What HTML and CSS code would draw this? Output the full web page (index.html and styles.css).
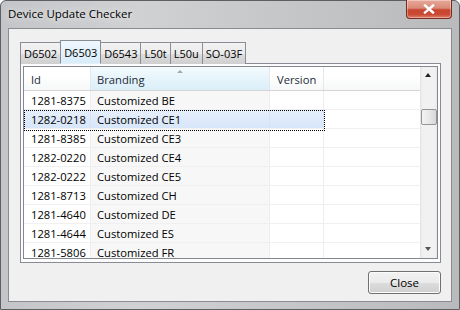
FILE: index.html
```html
<!DOCTYPE html>
<html lang="en">
<head>
<meta charset="utf-8">
<link rel="stylesheet" href="styles.css">
</head>
<body>
<div class="window">
  <div class="titlebar">
    <span class="title">Device Update Checker</span>
    <span class="close-x">
      <svg width="14" height="10" viewBox="0 0 14 10"><path d="M3 1.5 L11 8.5 M11 1.5 L3 8.5" stroke="#fff" stroke-width="2.4" stroke-linecap="square"/></svg>
    </span>
  </div>
  <div class="client">
    <div class="tabs">
      <span class="tab">D6502</span>
      <span class="tab sel">D6503</span>
      <span class="tab">D6543</span>
      <span class="tab">L50t</span>
      <span class="tab">L50u</span>
      <span class="tab">SO-03F</span>
    </div>
    <div class="panel">
      <div class="list">
        <div class="grid">
          <div class="row head">
            <span class="c id">Id</span>
            <span class="c br sorted">Branding<i class="arrow"></i></span>
            <span class="c ver">Version</span>
            <span class="c rest"></span>
          </div>
          <div class="row"><span class="c id">1281-8375</span><span class="c br">Customized BE</span><span class="c ver"></span><span class="c rest"></span></div>
          <div class="row selected"><span class="c id">1282-0218</span><span class="c br">Customized CE1</span><span class="c ver"></span><span class="c rest"></span></div>
          <div class="row"><span class="c id">1281-8385</span><span class="c br">Customized CE3</span><span class="c ver"></span><span class="c rest"></span></div>
          <div class="row"><span class="c id">1282-0220</span><span class="c br">Customized CE4</span><span class="c ver"></span><span class="c rest"></span></div>
          <div class="row"><span class="c id">1282-0222</span><span class="c br">Customized CE5</span><span class="c ver"></span><span class="c rest"></span></div>
          <div class="row"><span class="c id">1281-8713</span><span class="c br">Customized CH</span><span class="c ver"></span><span class="c rest"></span></div>
          <div class="row"><span class="c id">1281-4640</span><span class="c br">Customized DE</span><span class="c ver"></span><span class="c rest"></span></div>
          <div class="row"><span class="c id">1281-4644</span><span class="c br">Customized ES</span><span class="c ver"></span><span class="c rest"></span></div>
          <div class="row"><span class="c id">1281-5806</span><span class="c br">Customized FR</span><span class="c ver"></span><span class="c rest"></span></div>
        </div>
        <div class="scroll">
          <span class="up"></span>
          <span class="thumb"></span>
          <span class="track"></span>
          <span class="down"></span>
        </div>
      </div>
    </div>
    <div class="buttons">
      <span class="btn">Close</span>
    </div>
  </div>
</div>
</body>
</html>
```

FILE: styles.css
```css
*{margin:0;padding:0;box-sizing:border-box;}
body{width:460px;height:310px;overflow:hidden;background:#fff;
  font-family:"Open Sans","Noto Sans",sans-serif;font-size:11px;color:#000;}

.window{width:460px;height:310px;display:flex;flex-direction:column;
  border:1px solid #5d5f62;border-radius:6px 6px 0 0;
  background:linear-gradient(90deg,#c3c5c8 0%,#d0d1d3 30%,#c6c7c9 60%,#b9babc 100%);
}
.titlebar{height:27px;display:flex;align-items:flex-start;justify-content:space-between;padding-left:7px;}
.title{font-size:11.5px;line-height:26px;color:#000;text-shadow:0 0 8px #e9e9e9,0 0 4px #ececec;}
.close-x{width:46px;height:19px;margin-right:7px;margin-top:-1px;display:flex;align-items:center;justify-content:center;
  border:1px solid #7b2a1f;border-top:none;border-radius:0 0 4px 4px;
  background:linear-gradient(#e8a89a 0%,#d98a78 45%,#c8452f 55%,#c94a34 80%,#e0806a 100%);
  box-shadow:inset 0 0 0 1px rgba(255,255,255,.35);}

.client{flex:1;margin:0 7px 7px 7px;border:1px solid #8a8c8f;background:#f0f0f0;
  display:flex;flex-direction:column;padding:11px 10px 0 11px;}

.tabs{display:flex;align-items:flex-end;height:24px;margin-bottom:-1px;position:relative;z-index:1;}
.tab{height:22px;line-height:22px;padding:0 3px;border:1px solid #898c95;border-bottom:none;margin-right:-1px;
  background:linear-gradient(#f2f2f2 0%,#ebebeb 50%,#dddddd 51%,#cfcfcf 100%);font-size:11px;}
.tab.sel{height:24px;line-height:23px;background:linear-gradient(#eef7fd 0%,#e3f2fc 50%,#d8ecfa 100%);
  border-bottom:1px solid #e4f0f9;position:relative;z-index:2;}

.panel{height:200px;border:1px solid #898c95;background:#fcfcfc;padding:2px;}
.list{height:193px;border:1px solid #828790;background:#fff;display:flex;overflow:hidden;}
.grid{flex:1;overflow:hidden;}
.row{display:flex;height:19px;border-bottom:1px solid #f0f0f0;}
.c{display:block;padding-left:7px;line-height:20px;height:18px;border-right:1px solid #ededed;white-space:nowrap;overflow:hidden;font-size:11.2px;}
.id{width:67px;}
.br{width:179px;padding-left:6px;background:#f7f7f7;}
.ver{width:54px;}
.rest{flex:1;border-right:none;}

.row.head{height:24px;border-bottom:1px solid #d5d5d5;background:linear-gradient(#ffffff 0%,#ffffff 40%,#f6f7f8 100%);}
.row.head .c{height:23px;line-height:25px;color:#1e2a38;border-right:1px solid #e3e8ee;}
.row.head .sorted{position:relative;background:linear-gradient(#f4fafd 0%,#e6f4fb 50%,#dbeff9 100%);}
.row.head .rest{border-right:none;}
.arrow{position:absolute;left:86px;top:3px;width:0;height:0;border-left:3.5px solid transparent;border-right:3.5px solid transparent;border-bottom:3.5px solid #9eaab6;}

.row.selected .id,.row.selected .br,.row.selected .ver{background:linear-gradient(#e6effb,#d7e6fa);border-right-color:#d4e2f4;}
.row.selected{position:relative;}
.row.selected::after{content:"";position:absolute;left:0;top:0;width:299px;height:19px;border:1px dotted #000;}

.scroll{width:17px;display:flex;flex-direction:column;align-items:center;
  background:linear-gradient(90deg,#e3e3e3 0%,#f1f1f1 15%,#f1f1f1 85%,#e8e8e8 100%);}
.up,.down{height:17px;width:17px;position:relative;display:block;}
.up::after{content:"";position:absolute;left:5px;top:6px;border-left:3.5px solid transparent;border-right:3.5px solid transparent;border-bottom:4px solid #222;}
.down::after{content:"";position:absolute;left:5px;top:6px;border-left:3.5px solid transparent;border-right:3.5px solid transparent;border-top:4px solid #555;}
.thumb{display:block;width:16px;height:16px;margin-top:25px;border:1px solid #959595;border-radius:2px;
  background:linear-gradient(90deg,#f3f3f3 0%,#e8e8e8 50%,#d6d6d6 100%);}
.track{flex:1;}

.buttons{display:flex;justify-content:flex-end;padding-top:8px;}
.btn{width:73px;height:23px;line-height:21px;text-align:center;border:1px solid #707070;border-radius:3px;font-size:11.5px;
  background:linear-gradient(#f2f2f2 0%,#ebebeb 50%,#dddddd 51%,#cfcfcf 100%);box-shadow:inset 0 0 0 1px #fcfcfc;}
```
